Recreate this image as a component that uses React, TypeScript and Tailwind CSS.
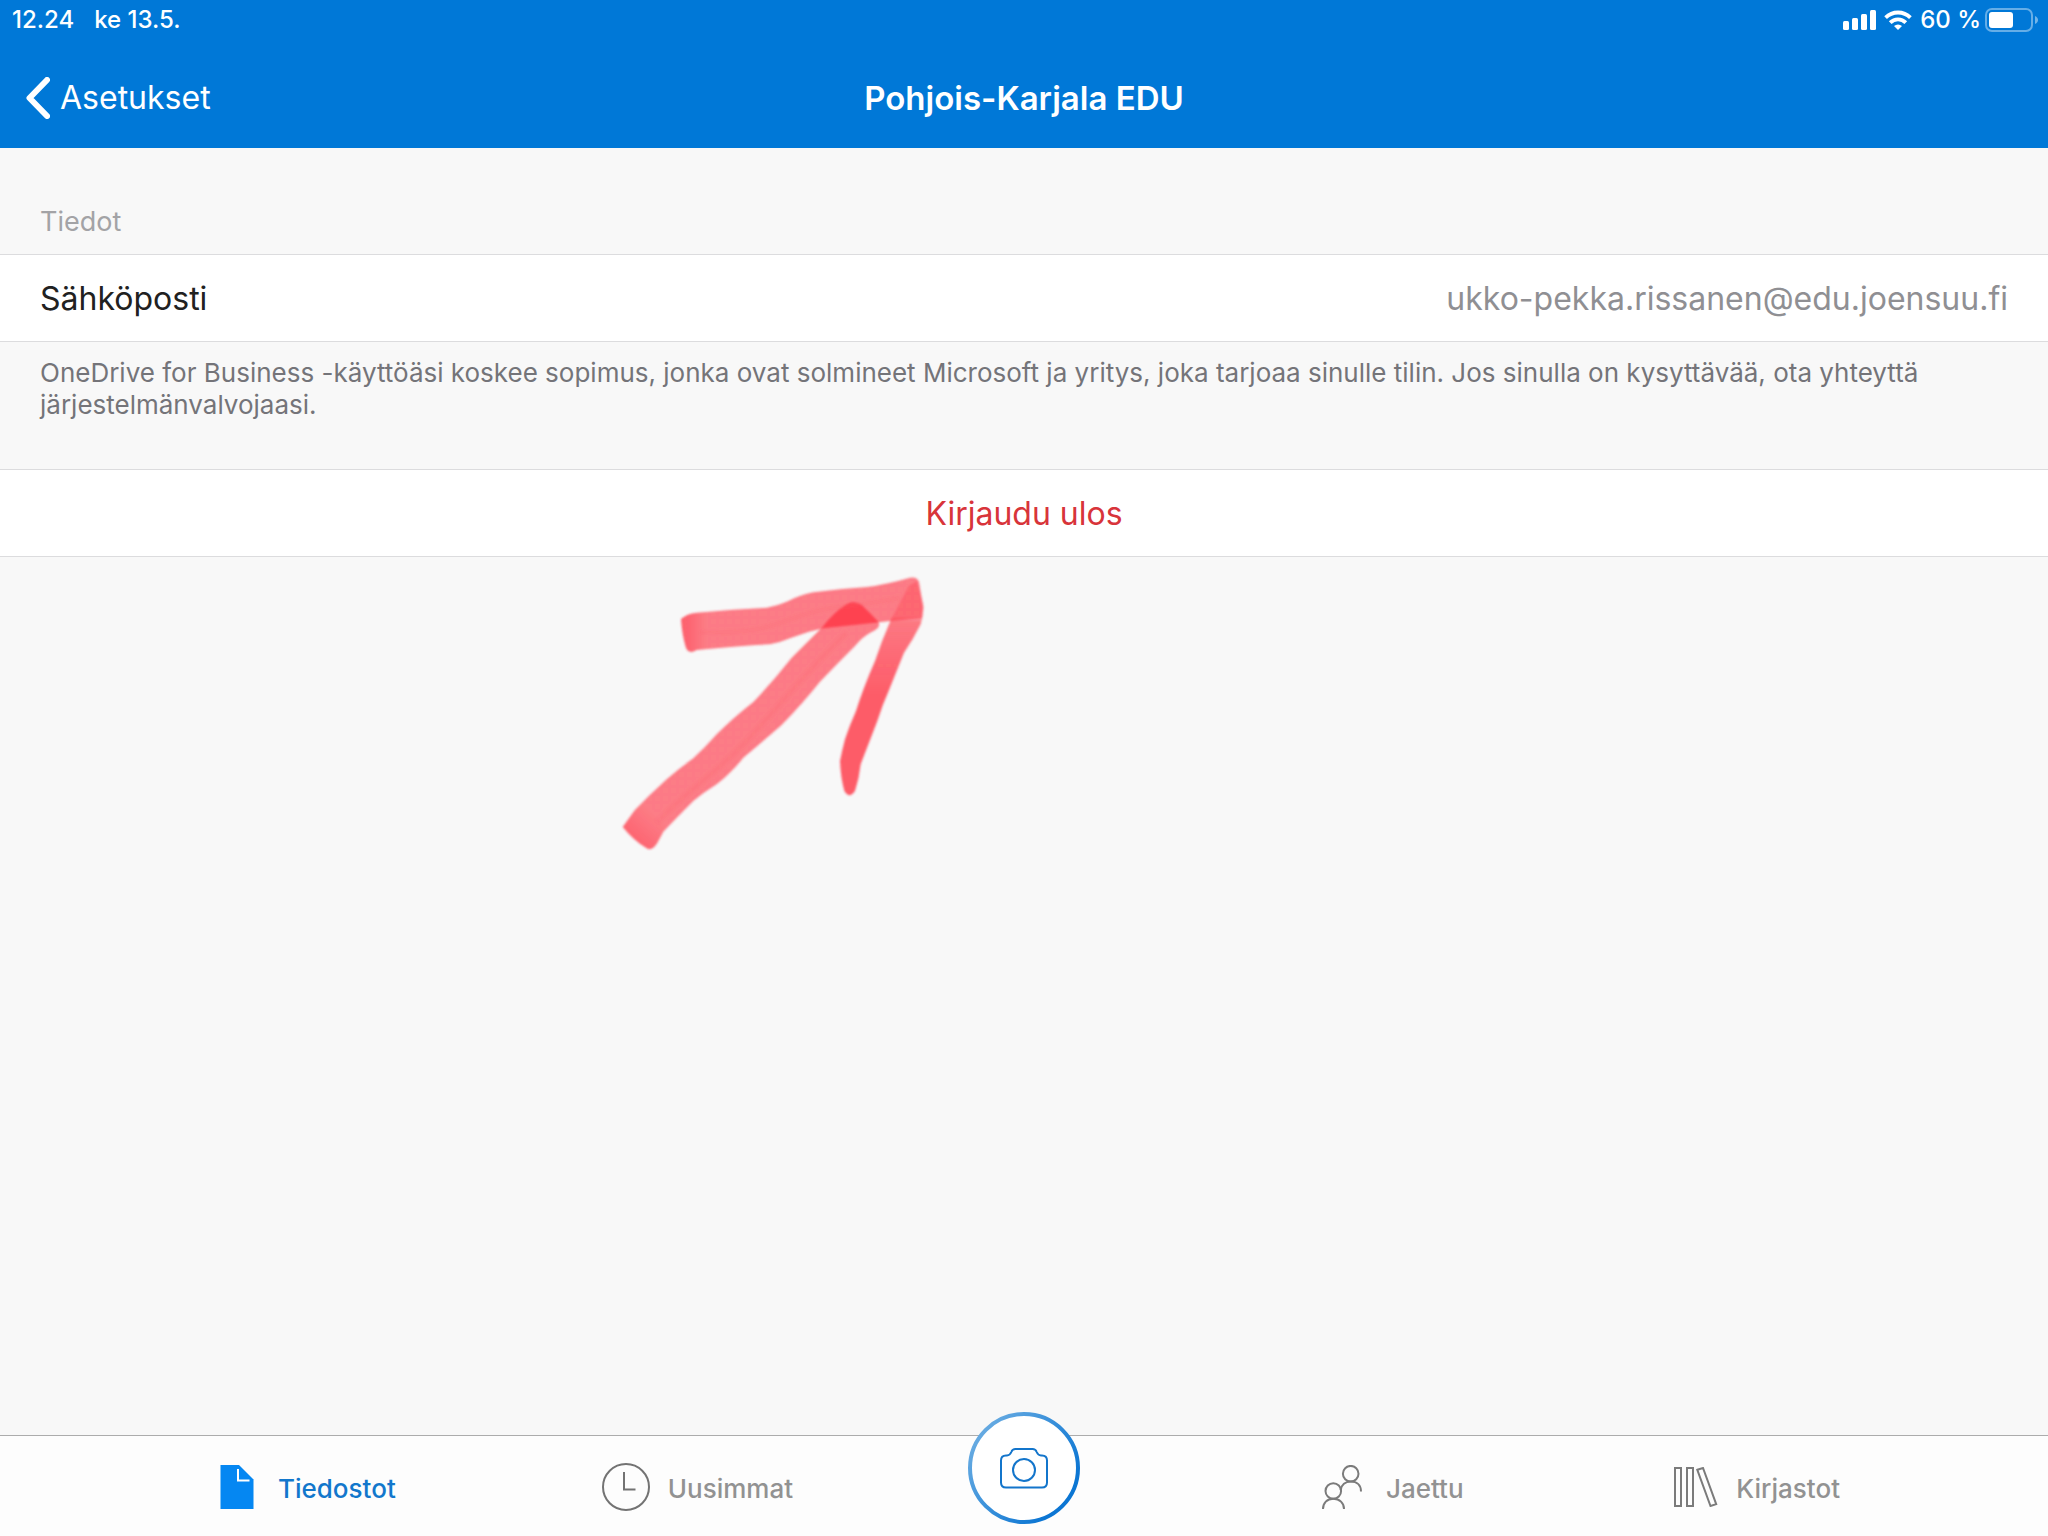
import type { ReactNode } from "react";

function SignalIcon() {
  return (
    <svg width="33" height="20" viewBox="0 0 33 20" fill="currentColor" aria-hidden="true">
      <rect x="0" y="11" width="6" height="9" rx="1.5" />
      <rect x="9" y="8" width="6" height="12" rx="1.5" />
      <rect x="18" y="4" width="6" height="16" rx="1.5" />
      <rect x="27" y="0" width="6" height="20" rx="1.5" />
    </svg>
  );
}

function WifiIcon() {
  return (
    <svg width="28" height="20" viewBox="0 0 28 20" aria-hidden="true">
      <g fill="none" stroke="currentColor" strokeWidth="3.8">
        <path d="M1.600 7.600a17.600 17.600 0 0 1 24.800 0" />
        <path d="M6.200 12.600a11 11 0 0 1 15.600 0" />
      </g>
      <path d="M14 20l-4-4a6 6 0 0 1 8 0z" fill="currentColor" />
    </svg>
  );
}

function BatteryIcon() {
  return (
    <svg width="53" height="24" viewBox="0 0 53 24" aria-hidden="true">
      <rect x="1" y="1" width="46" height="22" rx="6" fill="none" stroke="#fff" strokeOpacity="0.4" strokeWidth="2" />
      <rect x="4" y="4" width="24" height="16" rx="3" fill="#fff" />
      <path d="M50 8c4 1.500 4 6.500 0 8z" fill="#fff" fillOpacity="0.45" />
    </svg>
  );
}

function FileIcon() {
  return (
    <svg width="34" height="44" viewBox="0 0 34 44" aria-hidden="true">
      <path d="M0.500 0H19L33.500 14.500V44H0.500z" fill="#0587f2" />
      <path d="M18 4v11.500h11.500" fill="none" stroke="#fff" strokeWidth="2" />
    </svg>
  );
}

function ClockIcon() {
  return (
    <svg width="48" height="48" viewBox="0 0 48 48" fill="none" stroke="#737373" strokeWidth="2" aria-hidden="true">
      <circle cx="24" cy="24" r="23" />
      <path d="M22 9v17.500h11.500" />
    </svg>
  );
}

function PeopleIcon() {
  return (
    <svg width="40" height="44" viewBox="0 0 40 44" fill="none" stroke="#7b7b7b" strokeWidth="2" aria-hidden="true">
      <circle cx="28.700" cy="8.700" r="7.800" />
      <circle cx="11.300" cy="26" r="7.800" />
      <path d="M1 44c0-6 4-10.200 10.300-10.200S22 38 22 44" />
      <path d="M18.700 25c.8-5 4.500-8.500 10-8.500 6.500 0 10.300 4 10.300 10" />
    </svg>
  );
}

function BooksIcon() {
  return (
    <svg width="44" height="40" viewBox="0 0 44 40" fill="none" stroke="#7b7b7b" strokeWidth="2" aria-hidden="true">
      <rect x="1" y="1" width="6" height="38" />
      <rect x="13" y="1" width="6" height="38" />
      <path d="M23.300 2.800L29 1l13.200 36.200-5.700 1.800z" />
    </svg>
  );
}

function CameraButton() {
  return (
    <button type="button" aria-label="Kamera" className="-mt-6 size-28 shrink-0">
      <svg viewBox="0 0 112 112" fill="none" aria-hidden="true">
        <defs>
          <linearGradient id="ring" x1="0.1" y1="0.2" x2="0.85" y2="0.75">
            <stop offset="0" stopColor="#64a9e1" />
            <stop offset="1" stopColor="#0c76d3" />
          </linearGradient>
        </defs>
        <circle cx="56" cy="56" r="54" fill="#fff" stroke="url(#ring)" strokeWidth="4" />
        <g stroke="#1375cb" strokeWidth="2">
          <path d="M38 43.500h1c2.500 0 3.500-1.500 4.300-3.500.8-2.200 2-3 4.200-3h17c2.200 0 3.400.8 4.200 3 .8 2 1.800 3.500 4.300 3.500H74c3.500 0 5 1.800 5 5v22c0 3.200-1.800 5-5 5H38c-3.200 0-5-1.800-5-5v-22c0-3.200 1.800-5 5-5z" />
          <circle cx="56" cy="58" r="11" />
        </g>
      </svg>
    </button>
  );
}

function Tab({ icon, label, gap, active = false }: { icon: ReactNode; label: string; gap: string; active?: boolean }) {
  return (
    <a
      href="#"
      aria-current={active ? "page" : undefined}
      className={`flex items-center text-[26px] leading-8 font-medium ${gap} ${active ? "text-[#1277cc]" : "text-[#929292]"}`}
    >
      {icon}
      <span className="pt-1">{label}</span>
    </a>
  );
}

function MarkerArrow() {
  return (
    <svg
      className="pointer-events-none absolute top-1 left-1/2 -ml-[424px]"
      width="340"
      height="300"
      viewBox="0 0 1020 900"
      aria-hidden="true"
    >
      <defs>
        <filter id="soft" x="-5%" y="-5%" width="110%" height="110%">
          <feGaussianBlur stdDeviation="2.500" />
        </filter>
        <linearGradient id="shaft" gradientUnits="userSpaceOnUse" x1="110" y1="830" x2="170" y2="765">
          <stop offset="0" stopColor="#ff3040" stopOpacity="0.72" />
          <stop offset="1" stopColor="#ff3040" stopOpacity="0.62" />
        </linearGradient>
        <linearGradient id="barb" gradientUnits="userSpaceOnUse" x1="250" y1="0" x2="320" y2="0">
          <stop offset="0" stopColor="#ff3040" stopOpacity="0.76" />
          <stop offset="1" stopColor="#ff3040" stopOpacity="0.62" />
        </linearGradient>
        <linearGradient id="tail" gradientUnits="userSpaceOnUse" x1="0" y1="165" x2="0" y2="400">
          <stop offset="0" stopColor="#ff3040" stopOpacity="0.28" />
          <stop offset="0.07" stopColor="#ff3040" stopOpacity="0.64" />
          <stop offset="1" stopColor="#ff3040" stopOpacity="0.78" />
        </linearGradient>
      </defs>
      <g filter="url(#soft)">
        <path
          fill="url(#shaft)"
          d="M68 798L104 748Q150 700 200 655Q240 620 280 592Q315 560 350 520Q400 470 460 423Q520 360 575 290L665 200Q700 155 740 130Q760 117 785 132Q810 155 835 182Q845 200 815 213Q790 225 765 255Q715 305 660 362Q610 425 545 492Q490 540 430 590Q395 635 350 670Q310 695 280 720Q235 765 190 812L172 846Q155 872 140 862Q100 838 68 798Z"
        />
        <path
          fill="url(#barb)"
          d="M243 174Q260 158 290 155Q400 145 500 140Q530 135 560 122Q600 102 640 94Q720 83 800 78Q860 70 930 50Q950 46 957 62L970 140L966 172L872 180L670 202Q620 212 570 232Q540 245 510 250Q420 255 350 262L290 267Q265 282 257 258Q246 220 243 174Z"
        />
        <path
          fill="url(#tail)"
          d="M872 178L926 75L950 60L970 130Q972 160 962 190Q940 235 912 275Q890 330 868 385Q848 430 832 480L782 610Q778 650 765 690Q748 715 733 690Q722 650 720 600Q727 565 735 535Q748 495 768 450Q790 380 825 300Q845 240 872 178Z"
        />
        <path
          fill="#ff3040"
          fillOpacity="0.4"
          d="M668 201Q700 155 740 130Q760 117 785 132L836 184Z"
        />
        <path d="M300 215C480 215 500 200 600 165S760 140 900 110" fill="none" stroke="#f8606c" strokeOpacity="0.14" strokeWidth="14" />
        <path d="M170 785C260 690 330 650 420 560S600 350 740 215" fill="none" stroke="#f8606c" strokeOpacity="0.16" strokeWidth="18" />
      </g>
    </svg>
  );
}

export default function App() {
  return (
    <div className="flex min-h-screen flex-col bg-[#f8f8f8] font-['Inter',sans-serif]">
      <header className="bg-[#0078d7] text-white">
        <div className="flex h-10 items-center justify-between pr-[10px] pl-3 text-[24px] leading-7 font-medium">
          <div className="flex gap-5">
            <span>12.24</span>
            <span>ke 13.5.</span>
          </div>
          <div className="flex items-center gap-2">
            <SignalIcon />
            <WifiIcon />
            <div className="flex items-center gap-1">
              <span>60 %</span>
              <BatteryIcon />
            </div>
          </div>
        </div>
        <div className="grid h-27 grid-cols-[1fr_auto_1fr] items-center pt-2">
          <button type="button" className="flex items-center gap-[10px] justify-self-start pl-[26px] text-[32px] leading-10">
            <svg width="24" height="42" viewBox="0 0 24 42" fill="none" aria-hidden="true">
              <path d="M21 3L3.500 21 21 39" stroke="currentColor" strokeWidth="6" strokeLinecap="round" strokeLinejoin="round" />
            </svg>
            Asetukset
          </button>
          <h1 className="text-[33px] leading-10 font-semibold">Pohjois-Karjala EDU</h1>
        </div>
      </header>

      <main className="flex flex-1 flex-col">
        <h2 className="px-10 pt-[57px] pb-[15px] text-[27px] leading-[34px] text-[#a3a3a6]">Tiedot</h2>
        <dl className="flex h-22 items-center justify-between border-y border-[#dcdcde] bg-white px-10 pt-[2px] text-[32px] leading-10">
          <dt className="text-[#212121]">Sähköposti</dt>
          <dd className="text-[#8f8f93]">ukko-pekka.rissanen@edu.joensuu.fi</dd>
        </dl>
        <p className="px-10 pt-[15px] pb-12 text-[26px] leading-8 text-[#747479]">
          OneDrive for Business -käyttöäsi koskee sopimus, jonka ovat solmineet Microsoft ja yritys, joka tarjoaa sinulle tilin. Jos
          sinulla on kysyttävää, ota yhteyttä järjestelmänvalvojaasi.
        </p>
        <button type="button" className="h-22 border-y border-[#dcdcde] bg-white pt-[2px] text-[32px] leading-10 text-[#d8343a]">
          Kirjaudu ulos
        </button>
        <div className="relative flex-1">
          <MarkerArrow />
        </div>
      </main>

      <nav className="grid h-[101px] grid-cols-[1fr_auto_1fr] border-t border-[#acacac] bg-[#fdfdfd]">
        <div className="flex items-center justify-between pt-[2px] pr-[175px] pl-[220px]">
          <Tab icon={<FileIcon />} label="Tiedostot" gap="gap-6" active />
          <Tab icon={<ClockIcon />} label="Uusimmat" gap="gap-[18px]" />
        </div>
        <CameraButton />
        <div className="flex items-center justify-between pt-[2px] pr-[208px] pl-[242px]">
          <Tab icon={<PeopleIcon />} label="Jaettu" gap="gap-6" />
          <Tab icon={<BooksIcon />} label="Kirjastot" gap="gap-[18px]" />
        </div>
      </nav>
    </div>
  );
}
